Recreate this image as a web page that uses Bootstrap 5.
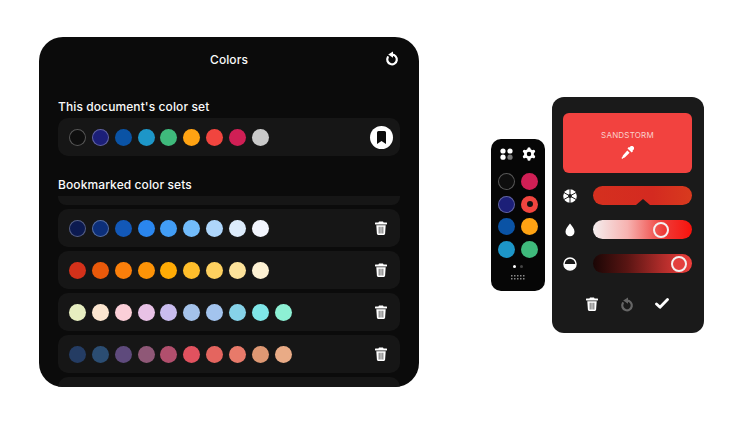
<!DOCTYPE html>
<html lang="en">
<head>
    <meta charset="UTF-8">
    <meta name="viewport" content="width=device-width, initial-scale=1.0">
    <title>Colors</title>
    <link href="https://cdn.jsdelivr.net/npm/bootstrap@5.3.0/dist/css/bootstrap.min.css" rel="stylesheet">
    <style>
        body {
            background: #fff;
            font-family: Inter, "Liberation Sans", sans-serif;
            width: 740px;
            height: 430px;
            overflow: hidden;
        }

        .stage {
            padding: 37px 0 0 39px;
        }

        .colors-panel {
            width: 380px;
            height: 350px;
            background: #0b0b0b;
            border-radius: 24px;
            overflow: hidden;
            padding: 0 19px;
            color: #fafafa;
        }

        .panel-head {
            height: 45px;
            font-size: 12px;
            font-weight: 500;
            letter-spacing: .1px;
        }

        .reset-btn {
            position: absolute;
            right: 1px;
            top: 14px;
            line-height: 0;
        }

        .set-title {
            font-size: 12px;
            font-weight: 500;
            letter-spacing: .1px;
            line-height: 16px;
        }

        .title-doc {
            margin-top: 17px;
            margin-bottom: 3px;
        }

        .title-saved {
            margin-top: 21px;
            margin-bottom: 3px;
        }

        .set-row {
            height: 38px;
            background: #161616;
            border-radius: 10px;
            padding: 0 13px 0 11px;
            margin-bottom: 4px;
        }

        .set-stub {
            height: 9px;
            border-radius: 0 0 8px 8px;
        }

        .swatches {
            gap: 5.85px;
        }

        .dot {
            width: 17px;
            height: 17px;
            border-radius: 50%;
            flex: none;
        }

        .dot-edge {
            box-shadow: inset 0 0 0 1px rgba(255, 255, 255, .3);
        }

        .bookmark-btn {
            width: 23px;
            height: 23px;
            border-radius: 50%;
            background: #fff;
            margin-right: -6px;
        }

        .remote-group {
            padding-top: 6px;
            margin-left: 72px;
            height: 350px;
        }

        .remote {
            width: 54px;
            height: 152px;
            background: #060606;
            border-radius: 10px;
            padding: 8px 7px 0 7px;
        }

        .remote-top {
            padding: 0 2px;
        }

        .remote-grid {
            display: grid;
            grid-template-columns: 17px 17px;
            column-gap: 6px;
            row-gap: 5.7px;
            justify-content: center;
            margin-top: 12px;
        }

        .pager {
            gap: 4px;
            margin-top: 7px;
        }

        .pager span {
            width: 3px;
            height: 3px;
            border-radius: 50%;
            background: #fff;
        }

        .pager span + span {
            background: #444;
        }

        .keys {
            margin-top: 7px;
        }

        .editor {
            width: 152px;
            height: 236px;
            background: #1a1a1a;
            border-radius: 12px;
            margin-left: 7px;
            padding: 16px 12px 0 11px;
        }

        .sand-box {
            height: 60px;
            background: #f2423f;
            border-radius: 6px;
            color: #fbd0cc;
            font-size: 8px;
            letter-spacing: .2px;
            gap: 5px;
            margin-bottom: 13px;
            padding-top: 1px;
        }

        .slider-row {
            height: 19px;
            margin-bottom: 15px;
            gap: 15px;
        }

        .slider-ico {
            width: 15px;
            line-height: 0;
            flex: none;
        }

        .slider-bar {
            flex: 1;
            height: 19px;
            border-radius: 10px;
        }

        .bar-hue {
            background: linear-gradient(90deg, #d5301f, #d42a20 60%, #d83a1e);
        }

        .bar-sat {
            background: linear-gradient(90deg, #f4eeee, #f7b2b0 35%, #ee3a36 72%, #f8120c);
        }

        .bar-lum {
            background: linear-gradient(90deg, #1a0605, #5a1513 35%, #b02c2a 70%, #ef3f3c);
        }

        .thumb {
            position: absolute;
            top: 1.5px;
            width: 16px;
            height: 16px;
            border: 2px solid #f4f0f0;
            border-radius: 50%;
        }

        .thumb-fill {
            background: #e33f3d;
        }

        .notch {
            position: absolute;
            bottom: 0;
            left: 43px;
            width: 0;
            height: 0;
            border-left: 7px solid transparent;
            border-right: 7px solid transparent;
            border-bottom: 6px solid #1a1a1a;
        }

        .editor-actions {
            padding: 0 23px;
            margin-top: 7px;
            line-height: 0;
        }

        .nudge-down {
            margin-top: 2px;
        }
    </style>
</head>

<body>
    <!-- Icon sprites -->
    <svg width="0" height="0" class="position-absolute">
        <symbol id="ico-trash" viewBox="0 0 12 14">
            <path fill="currentColor" d="M4 .4h4l.6 1.2H11.400a.6.6 0 0 1 0 1.900H.6a.6.6 0 0 1 0-1.900H3.400zM1.300 4.300h9.400l-.6 8.500a1.200 1.200 0 0 1-1.200 1.100H3.100a1.200 1.200 0 0 1-1.200-1.100z"/>
            <path fill="#555" d="M3.700 5.800h.9v6.600h-.9zM5.550 5.800h.9v6.600h-.9zM7.400 5.800h.9v6.600h-.9z"/>
        </symbol>
        <symbol id="ico-reset" viewBox="0 0 14 15">
            <path fill="none" stroke="currentColor" stroke-width="2.200" stroke-linecap="round" d="M7 3.700A4.800 4.800 0 1 1 2.800 6.200"/>
            <path fill="currentColor" d="M8 .4v6.400L3.200 3.600z"/>
        </symbol>
    </svg>

    <div class="stage d-flex align-items-start">
        <!-- Colors panel -->
        <div class="colors-panel">
            <div class="panel-head position-relative d-flex align-items-center justify-content-center">
                Colors
                <span class="reset-btn text-white">
                    <svg width="14" height="15"><use href="#ico-reset"/></svg>
                </span>
            </div>
            <div class="set-title title-doc">This document's color set</div>
            <div class="set-row d-flex align-items-center justify-content-between" id="docRow">
                <div class="swatches d-flex" data-set="doc"></div>
                <span class="bookmark-btn d-flex align-items-center justify-content-center">
                    <svg width="9" height="13" viewBox="0 0 9 13"><path fill="#0b0b0b" d="M1.500 0h6A1.500 1.500 0 0 1 9 1.500V13L4.500 10 0 13V1.500A1.500 1.500 0 0 1 1.500 0z"/></svg>
                </span>
            </div>
            <div class="set-title title-saved">Bookmarked color sets</div>
            <div class="set-row set-stub"></div>
            <div id="savedSets"></div>
            <div class="set-row"></div>
        </div>

        <div class="remote-group d-flex align-items-center">
            <!-- Small color remote -->
            <div class="remote d-flex flex-column align-items-center">
                <div class="remote-top d-flex align-items-center justify-content-between w-100">
                    <svg width="13" height="12" viewBox="0 0 13 12">
                        <circle cx="3" cy="3" r="2.600" fill="#fff"/><circle cx="10" cy="3" r="2.600" fill="#fff"/>
                        <circle cx="3" cy="9.200" r="2.600" fill="#fff"/><circle cx="10" cy="9.200" r="2.600" fill="#777"/>
                    </svg>
                    <svg width="14" height="14" viewBox="0 0 24 24">
                        <circle cx="12" cy="12" r="8.500" fill="#fff"/>
                        <path stroke="#fff" stroke-width="5.500" stroke-linecap="round" d="M12 3v18M4.200 7.500l15.600 9M4.200 16.500l15.600-9"/>
                        <circle cx="12" cy="12" r="3.800" fill="#060606"/>
                    </svg>
                </div>
                <div class="remote-grid">
                    <span class="dot dot-edge" style="background:#0e0e0e"></span>
                    <span class="dot" style="background:#d01f55"></span>
                    <span class="dot dot-edge" style="background:#1c1f78"></span>
                    <span class="dot d-flex align-items-center justify-content-center" style="background:#f1453f"><span class="d-block rounded-circle" style="width:6px;height:6px;background:#111"></span></span>
                    <span class="dot" style="background:#0a53a5"></span>
                    <span class="dot" style="background:#ffa313"></span>
                    <span class="dot" style="background:#1d96c8"></span>
                    <span class="dot" style="background:#3fba7c"></span>
                </div>
                <div class="pager d-flex"><span></span><span></span></div>
                <svg class="keys" width="14" height="5" viewBox="0 0 14 5" fill="#8a8a8a">
                    <path d="M0 0h1.500v1.500H0zM3 0h1.500v1.500H3zM6 0h1.500v1.500H6zM9 0h1.500v1.500H9zM12 0h1.500v1.500H12zM0 3h1.500v1.500H0zM3 3h1.500v1.500H3zM6 3h1.500v1.500H6zM9 3h1.500v1.500H9zM12 3h1.500v1.500H12z"/>
                </svg>
            </div>

            <!-- Color editor -->
            <div class="editor d-flex flex-column">
                <div class="sand-box d-flex flex-column align-items-center justify-content-center">
                    <span>SANDSTORM</span>
                    <svg width="13" height="13" viewBox="0 0 13 13"><path fill="#fff" d="M8.300 1.500 9.600.3a1.700 1.700 0 0 1 2.400 0l.7.7a1.700 1.700 0 0 1 0 2.400l-1.200 1.300.5.600-1.300 1.300-4.200-4.200 1.300-1.300zM6.300 4.400l2.300 2.300-4.800 4.800-1.500.5-1 1-.9-.9 1-1 .5-1.500z"/></svg>
                </div>
                <div class="slider-row d-flex align-items-center">
                    <span class="slider-ico">
                        <svg width="14" height="14" viewBox="0 0 14 14"><circle cx="7" cy="7" r="6.800" fill="#fff"/><circle cx="7" cy="7" r="1.900" fill="#1a1a1a"/><path stroke="#1a1a1a" stroke-width="1" d="M7 0v14M.9 3.500l12.200 7M.9 10.500l12.200-7"/></svg>
                    </span>
                    <div class="slider-bar bar-hue position-relative"><span class="notch"></span></div>
                </div>
                <div class="slider-row d-flex align-items-center">
                    <span class="slider-ico">
                        <svg width="14" height="14" viewBox="0 0 14 14"><path fill="#fff" d="M7 .5c2 2.700 4.500 5.300 4.500 8.300a4.500 4.500 0 0 1-9 0C2.500 5.800 5 3.200 7 .5z"/></svg>
                    </span>
                    <div class="slider-bar bar-sat position-relative"><span class="thumb" style="left:60px"></span></div>
                </div>
                <div class="slider-row d-flex align-items-center">
                    <span class="slider-ico">
                        <svg width="14" height="14" viewBox="0 0 14 14"><circle cx="7" cy="7" r="6" fill="none" stroke="#fff" stroke-width="1.500"/><path fill="#fff" d="M1 7a6 6 0 0 0 12 0z"/></svg>
                    </span>
                    <div class="slider-bar bar-lum position-relative"><span class="thumb thumb-fill" style="left:78px"></span></div>
                </div>
                <div class="editor-actions d-flex align-items-center justify-content-between">
                    <svg class="text-white" width="12" height="14"><use href="#ico-trash"/></svg>
                    <svg class="nudge-down" style="color:#666" width="14" height="15"><use href="#ico-reset"/></svg>
                    <svg width="14" height="11" viewBox="0 0 14 11"><path fill="none" stroke="#fff" stroke-width="2.800" stroke-linecap="round" stroke-linejoin="round" d="M1.500 6 5 9.300 12.500 1.500"/></svg>
                </div>
            </div>
        </div>
    </div>

    <script src="https://cdn.jsdelivr.net/npm/bootstrap@5.3.0/dist/js/bootstrap.bundle.min.js"></script>
    <script>
        const docColors = ['#0e0e0e', '#1c1f78', '#0a53a5', '#1d96c8', '#3fba7c', '#ffa313', '#f1453f', '#d01f55', '#c9c9c9'];
        const savedColors = [
            ['#0c1a50', '#0c2f7a', '#1258b8', '#2a86ee', '#429df5', '#72bcfb', '#aed6fb', '#dcebfb', '#f2f5fd'],
            ['#d4311a', '#e9590a', '#fb7f0a', '#fd9307', '#ffab05', '#ffbe2b', '#fdd05f', '#fde39b', '#fdf1d3'],
            ['#e6edc0', '#fbe5cf', '#fbcfd8', '#e8c2e6', '#c9bcee', '#a4c2ea', '#a3c4ee', '#86d2e8', '#7fe6e8', '#8df0d4'],
            ['#243c63', '#2b4d72', '#5e4a7c', '#8f5877', '#b14f6d', '#e1525f', '#e4655f', '#e87a6a', '#de9873', '#e9ab86']
        ];

        function fillSwatches(holder, colors) {
            colors.forEach((color, i) => {
                const dot = document.createElement('span');
                dot.className = 'dot';
                // dark swatches get a thin outline
                if (i < 2 && parseInt(color.slice(1, 3), 16) < 30) dot.classList.add('dot-edge');
                dot.style.background = color;
                holder.appendChild(dot);
            });
        }

        fillSwatches(document.querySelector('[data-set="doc"]'), docColors);

        const savedSets = document.getElementById('savedSets');
        savedColors.forEach(colors => {
            const row = document.createElement('div');
            row.className = 'set-row d-flex align-items-center justify-content-between';
            const holder = document.createElement('div');
            holder.className = 'swatches d-flex';
            fillSwatches(holder, colors);
            row.appendChild(holder);
            row.insertAdjacentHTML('beforeend', '<svg class="text-white" width="12" height="14"><use href="#ico-trash"/></svg>');
            savedSets.appendChild(row);
        });
    </script>
</body>
</html>
